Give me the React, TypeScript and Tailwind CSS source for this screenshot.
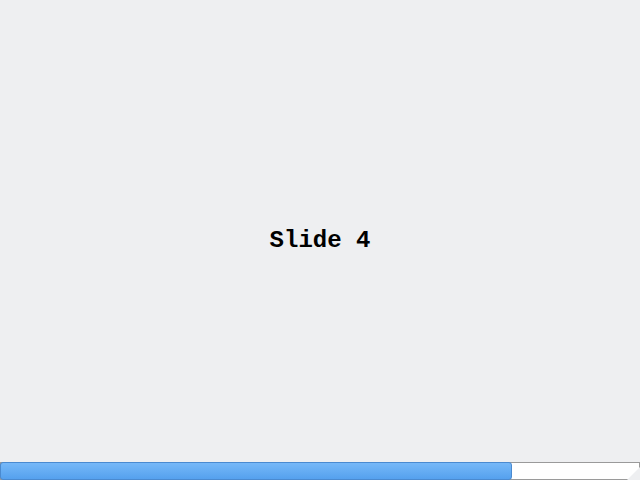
export default function App() {
  const current = 4;
  const total = 5;
  const fill = Math.round((current / total) * 640);

  return (
    <div className="flex h-[480px] w-[640px] flex-col bg-[#eeeff1]">
      <div className="flex flex-1 items-center justify-center pt-[20px]">
        <h1 className="font-['Liberation_Mono',monospace] text-[24px] font-bold text-black">
          Slide {current}
        </h1>
      </div>
      {/* progress track */}
      <div className="relative h-[18px] w-full border border-[#9a9a9a] bg-white">
        <div
          className="absolute -left-px -top-px h-[18px] rounded-[3px] border border-[#4a8ad0] bg-gradient-to-b from-[#76b8f8] to-[#55a1ee]"
          style={{ width: `${fill}px` }}
        />
        {/* corner grip */}
        <div className="absolute -bottom-px -right-px h-0 w-0 border-b-[13px] border-l-[13px] border-b-[#eeeff1] border-l-transparent" />
      </div>
    </div>
  );
}
